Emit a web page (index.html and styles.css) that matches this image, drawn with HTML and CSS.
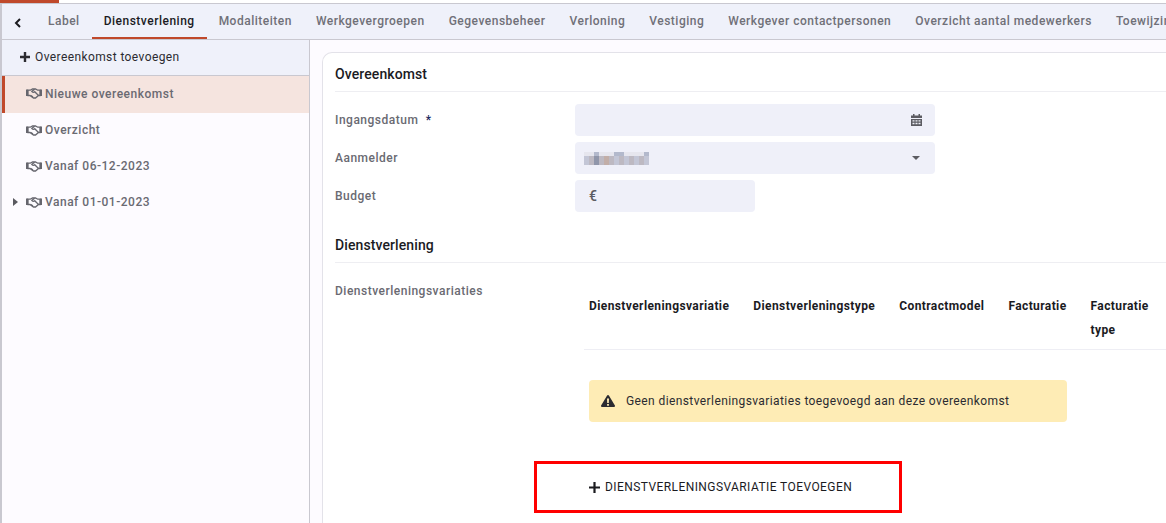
FILE: index.html
```html
<!DOCTYPE html>
<html lang="nl">
<head>
<meta charset="utf-8">
<title>Dienstverlening</title>
<link rel="stylesheet" href="styles.css">
</head>
<body>
<svg class="defs" width="0" height="0" aria-hidden="true">
  <symbol id="hands" viewBox="0 0 16 11">
    <path d="M0 1.500h2v6.500H0zM14 1.500h2v6.500h-2z" fill="currentColor"/>
    <path d="M2 2.200h2.300L6.500 1h3l2.200 1.200H14V7.500h-1.500L9.500 10H7.500L4 7.500H2z" fill="none" stroke="currentColor" stroke-width="1.300"/>
    <path d="M8.500 1.200 5.800 3.400c.7 1.100 1.700 1.200 2.900.3l3.800 3.800M5 7.600l2 1.400" fill="none" stroke="currentColor" stroke-width="1.300"/>
  </symbol>
</svg>
<div class="progress"></div>
<div class="app">
  <nav class="tabs">
    <button class="back" type="button" aria-label="Terug">
      <svg width="8" height="10" viewBox="0 0 8 10"><path d="M6 1 2 5l4 4" fill="none" stroke="currentColor" stroke-width="2"/></svg>
    </button>
    <a class="tab tab-first">Label</a>
    <a class="tab active">Dienstverlening</a>
    <a class="tab">Modaliteiten</a>
    <a class="tab">Werkgevergroepen</a>
    <a class="tab">Gegevensbeheer</a>
    <a class="tab">Verloning</a>
    <a class="tab">Vestiging</a>
    <a class="tab">Werkgever contactpersonen</a>
    <a class="tab">Overzicht aantal medewerkers</a>
    <a class="tab">Toewijzingen</a>
  </nav>
  <div class="body">
    <aside class="side">
      <div class="side-head">
        <svg class="plus" width="12" height="12" viewBox="0 0 12 12"><path d="M6 1v10M1 6h10" stroke="currentColor" stroke-width="2.400"/></svg>
        <span>Overeenkomst toevoegen</span>
      </div>
      <div class="side-item selected"><svg class="hands"><use href="#hands"/></svg>Nieuwe overeenkomst</div>
      <div class="side-item"><svg class="hands"><use href="#hands"/></svg>Overzicht</div>
      <div class="side-item"><svg class="hands"><use href="#hands"/></svg>Vanaf 06-12-2023</div>
      <div class="side-item"><span class="caret"></span><svg class="hands"><use href="#hands"/></svg>Vanaf 01-01-2023</div>
    </aside>
    <main class="main">
      <section class="card">
        <h2 class="title">Overeenkomst</h2>
        <div class="row">
          <label class="lbl">Ingangsdatum <span class="req">*</span></label>
          <div class="field wide">
            <svg class="end-icon" width="11" height="12" viewBox="0 0 11 12"><path d="M2 0h1.500v1.500h4V0H9v1.500h2V4H0V1.500h2zM0 5h11v7H0zm1.500 1.200v1.400h2V6.200zm3 0v1.400h2V6.200zm3 0v1.400h2V6.200zm-6 2.600v1.400h2V8.800zm3 0v1.400h2V8.800zm3 0v1.400h2V8.800z" fill="currentColor" fill-rule="evenodd"/></svg>
          </div>
        </div>
        <div class="row">
          <label class="lbl">Aanmelder</label>
          <div class="field wide">
            <div class="blur"><i></i><i></i><i></i><i></i><i></i><i></i><i></i><i></i><i></i><i></i><i></i><i></i><i></i><i></i><i></i><i></i><i></i><i></i><i></i><i></i><i></i><i></i><i></i><i></i><i></i><i></i></div>
            <span class="drop"></span>
          </div>
        </div>
        <div class="row">
          <label class="lbl">Budget</label>
          <div class="field narrow"><span class="euro">€</span></div>
        </div>
        <h2 class="title title-second">Dienstverlening</h2>
        <div class="variations">
          <div class="lbl lbl-top">Dienstverleningsvariaties</div>
          <div class="var-body">
            <div class="thead">
              <div class="th">Dienstverleningsvariatie</div>
              <div class="th">Dienstverleningstype</div>
              <div class="th">Contractmodel</div>
              <div class="th">Facturatie</div>
              <div class="th th-wrap">Facturatie type</div>
            </div>
            <div class="notice">
              <svg width="14" height="12" viewBox="0 0 14 12"><path fill-rule="evenodd" d="M7 0c.4 0 .7.200.9.500l6 10c.4.700-.1 1.500-.9 1.500H1c-.8 0-1.300-.8-.9-1.500l6-10C6.300.2 6.600 0 7 0zM6 3.500l.2 4.500h1.600L8 3.500zM6.100 9v1.700h1.800V9z" fill="currentColor"/></svg>
              <span>Geen dienstverleningsvariaties toegevoegd aan deze overeenkomst</span>
            </div>
          </div>
        </div>
        <button class="add" type="button">
          <svg width="11" height="11" viewBox="0 0 11 11"><path d="M5.500 0v11M0 5.500h11" stroke="currentColor" stroke-width="2.200"/></svg>
          DIENSTVERLENINGSVARIATIE TOEVOEGEN
        </button>
      </section>
    </main>
  </div>
</div>
</body>
</html>
```
FILE: styles.css
```css
* { box-sizing: border-box; }
html, body { margin: 0; height: 100%; overflow: hidden; }
body {
  background: #fff;
  font-family: Roboto, "Liberation Sans", sans-serif;
  font-size: 12px;
  letter-spacing: 0.5px;
  color: #1b1b1f;
  width: 1166px;
  height: 523px;
  position: relative;
}
.defs { position: absolute; }
.progress {
  position: absolute;
  left: 0;
  top: 0;
  width: 59px;
  height: 3px;
  background: #c0492b;
}
.app {
  margin-top: 3px;
  height: 520px;
  border-top: 1px solid #c9c8d0;
  border-left: 2px solid #c9c8d0;
  display: flex;
  flex-direction: column;
}
.tabs {
  height: 36px;
  flex: none;
  background: #eff1fa;
  border-bottom: 1px solid #c9c8d0;
  display: flex;
  align-items: stretch;
  white-space: nowrap;
  overflow: hidden;
}
.back {
  width: 32px;
  flex: none;
  border: 0;
  background: none;
  padding: 2px 0 0 12px;
  color: #1b1b1f;
  display: flex;
  align-items: center;
  justify-content: flex-start;
}
.tab {
  flex: none;
  padding: 0 12px;
  line-height: 34px;
  font-weight: 500;
  color: #707078;
  margin-bottom: -1px;
  border-bottom: 2px solid transparent;
}
.tab-first { padding-left: 14px; }
.tab.active {
  color: #1b1b1f;
  border-bottom: 3px solid #c0492b;
}
.body { flex: 1; display: flex; min-height: 0; }
.side {
  width: 308px;
  flex: none;
  background: #fdfbff;
  border-right: 1px solid #c9c8d0;
}
.side-head {
  height: 36px;
  background: #eff1fa;
  border-bottom: 1px solid #c9c8d0;
  display: flex;
  align-items: center;
  padding: 0 0 1px 17px;
  gap: 4px;
  color: #2b2b30;
  letter-spacing: 0.4px;
}
.side-item {
  height: 36px;
  display: flex;
  align-items: center;
  padding: 0 0 2px 24px;
  font-weight: 500;
  color: #6a6a72;
  position: relative;
}
.side-item.selected {
  background: #f5e4df;
  border-left: 3px solid #c0492b;
  padding-left: 21px;
  height: 37px;
  padding-bottom: 2px;
}
.hands { width: 16px; height: 11px; margin-right: 3px; flex: none; color: #66666e; }
.caret {
  position: absolute;
  left: 11px;
  top: 13px;
  border-left: 5px solid #5a5a60;
  border-top: 4px solid transparent;
  border-bottom: 4px solid transparent;
}
.main {
  flex: 1;
  min-width: 0;
  background: #fdfbff;
  padding: 12px 0 0 12px;
  overflow: hidden;
}
.card {
  background: #fff;
  border: 1px solid #e3e2e9;
  border-right: 0;
  border-bottom: 0;
  border-radius: 10px 0 0 0;
  padding: 0 0 0 12px;
  height: 600px;
}
.title {
  margin: 0 0 12px;
  height: 39px;
  line-height: 42px;
  font-size: 14px;
  font-weight: 500;
  letter-spacing: 0.1px;
  color: #1b1b1f;
  border-bottom: 1px solid #eeeef2;
}
.title-second { margin: 12px 0 0; height: 39px; }
.row {
  display: flex;
  align-items: center;
  height: 32px;
  margin-bottom: 6px;
}
.lbl {
  width: 240px;
  flex: none;
  font-weight: 500;
  color: #6a6a72;
}
.req { color: #1d2a60; margin-left: 4px; }
.field {
  height: 32px;
  background: #eff0f9;
  border-radius: 4px;
  display: flex;
  align-items: center;
  padding: 0 14px;
  position: relative;
  color: #5c5c62;
}
.wide { width: 360px; justify-content: space-between; }
.narrow { width: 180px; }
.end-icon { margin-left: auto; margin-right: -1px; }
.euro { font-weight: 500; font-size: 14px; }
.blur {
  margin-left: -5px;
  width: 65px;
  height: 13px;
  display: grid;
  grid-template-columns: repeat(13, 5px);
  grid-template-rows: 4px 9px;
}
.blur i { display: block; background: #c3c6d6; }
.blur i:nth-child(-n+13) { background: #e6e6ee; }
.blur i:nth-child(n+14):nth-child(odd) { background: #bdb9c2; }
.blur i:nth-child(3), .blur i:nth-child(7), .blur i:nth-child(8), .blur i:nth-child(13) { background: #b3b9cc; }
.blur i:nth-child(16), .blur i:nth-child(21), .blur i:nth-child(25) { background: #9096aa; }
.blur i:nth-child(18), .blur i:nth-child(25) { background: #c2aea8; }
.drop {
  border-top: 4px solid #5c5c62;
  border-left: 4px solid transparent;
  border-right: 4px solid transparent;
  margin-right: 1px;
}
.variations { display: flex; padding-top: 20px; }
.lbl-top { width: 249px; line-height: 16px; }
.var-body { flex: 1; min-width: 0; padding-top: 11px; }
.thead {
  display: flex;
  gap: 24px;
  padding: 0 0 6px 5px;
  border-bottom: 1px solid #eeeef4;
  font-weight: 700;
  line-height: 24px;
  height: 56px;
  color: #1b1b1f;
  letter-spacing: 0.4px;
}
.th { flex: none; }
.th-wrap { width: 60px; }
.notice {
  margin: 30px 0 0 5px;
  width: 478px;
  height: 42px;
  background: #feecb5;
  border-radius: 4px;
  display: flex;
  align-items: center;
  gap: 11px;
  padding-left: 12px;
  color: #2b2b30;
  letter-spacing: 0.4px;
}
.add {
  margin: 39px 0 0 199px;
  width: 368px;
  height: 52px;
  border: 3px solid #f00;
  background: #fff;
  display: flex;
  align-items: center;
  gap: 5px;
  padding: 0 0 0 52px;
  font: inherit;
  letter-spacing: 0.42px;
  color: #1b1b1f;
}
```
